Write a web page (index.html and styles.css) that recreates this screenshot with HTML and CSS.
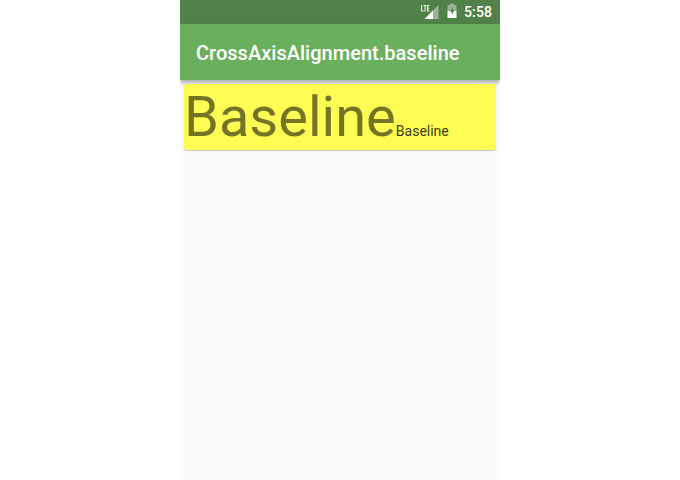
FILE: index.html
```html
<!DOCTYPE html>
<html lang="en">
<head>
<meta charset="utf-8">
<title>CrossAxisAlignment.baseline</title>
<link rel="stylesheet" href="styles.css">
</head>
<body>
<main class="screen">
  <div class="status-bar">
    <svg class="signal" width="20" height="18" viewBox="0 0 20 18">
      <path class="faint" d="M18.500 2V16H4.500Z"/>
      <path class="solid" d="M13 7.500V16H4.500Z"/>
      <path class="line" d="M1.500 2V8H3.500M3.500 2.500H6.500M5 2.500V8.500M9.500 2.500H7.500V8H9.500M7.500 5.200H9.200"/>
    </svg>
    <svg class="battery" width="10" height="18" viewBox="0 0 10 18">
      <path class="faint" d="M3 1.500H7V3H9.500V9H.5V3H3Z"/>
      <path class="solid" d="M.5 9H9.500V16H.5Z"/>
      <path class="bolt" d="M6 4.500L3 9.800H4.800V13L7.500 8H6Z"/>
    </svg>
    <span class="clock">5:58</span>
  </div>
  <header class="app-bar"><h1>CrossAxisAlignment.baseline</h1></header>
  <section class="card">
    <span class="display">Baseline</span><span class="body-text">Baseline</span>
  </section>
</main>
</body>
</html>
```
FILE: styles.css
```css
body {
  margin: 0;
  background: #fff;
  font-family: Roboto, sans-serif;
}
.screen {
  width: 320px;
  height: 480px;
  margin: 0 auto;
  background: #fafafa;
  overflow: hidden;
}
.status-bar {
  display: flex;
  align-items: center;
  justify-content: flex-end;
  height: 24px;
  padding-right: 8px;
  box-sizing: border-box;
  background: #508148;
  color: #fff;
}
.signal { margin: 0 7px 1px 0; }
.battery { margin: 0 7px 2px 0; }
.faint { fill: #fff; opacity: .42; }
.solid { fill: #fff; }
.line { fill: none; stroke: #fff; stroke-width: 1; }
.bolt { fill: #508148; }
.clock {
  font-size: 14px;
  line-height: 24px;
  font-weight: 500;
  letter-spacing: .1px;
}
.app-bar {
  display: flex;
  align-items: center;
  height: 56px;
  padding: 2px 16px 0;
  box-sizing: border-box;
  background: #6aaf5d;
  box-shadow: 0 3px 4px rgba(0, 0, 0, .3);
}
h1 {
  margin: 0;
  color: #fff;
  font-size: 20px;
  line-height: 24px;
  font-weight: 500;
  letter-spacing: .02px;
}
.card {
  display: flex;
  align-items: baseline;
  height: 66px;
  margin: 4px;
  border-radius: 3px;
  background: #fffd54;
  box-shadow: 0 1px 1px rgba(0, 0, 0, .2), 0 0 1px rgba(0, 0, 0, .15);
}
.display {
  color: rgba(0, 0, 0, .54);
  font-size: 56px;
  line-height: 66px;
}
.body-text {
  color: rgba(0, 0, 0, .8);
  font-size: 14px;
}
```
